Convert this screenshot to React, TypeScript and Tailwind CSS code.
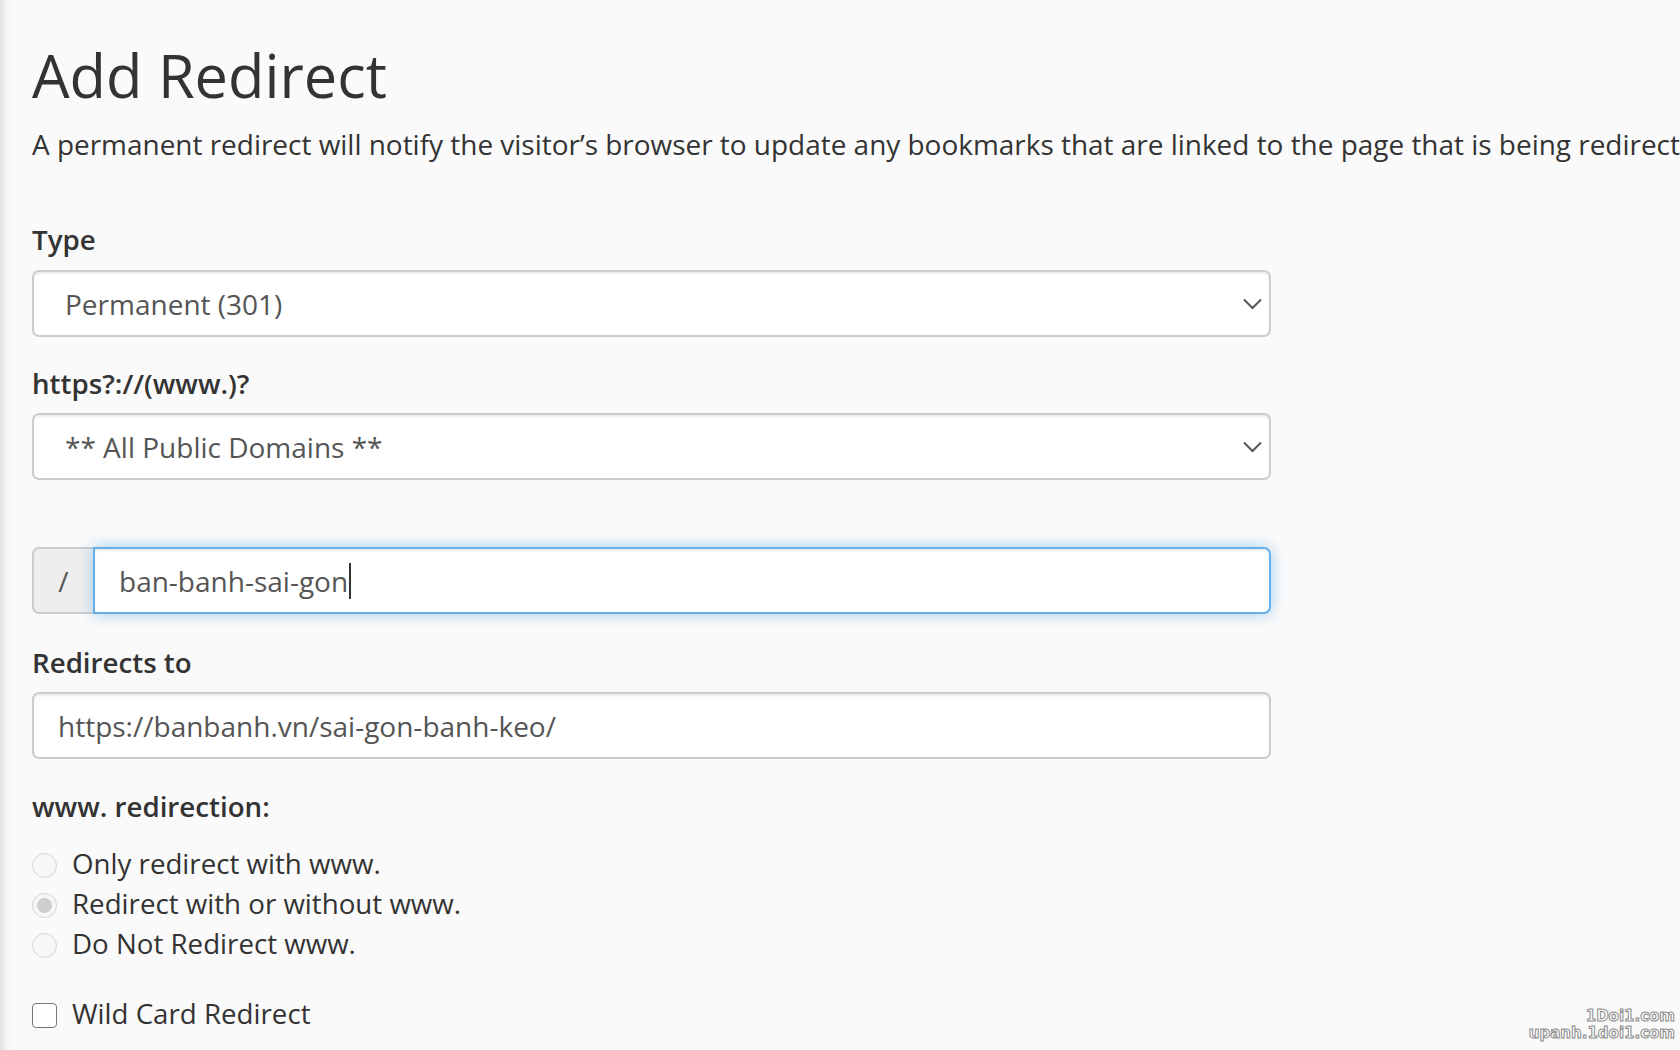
import { ChangeEvent } from 'react'

/** cPanel-style "Add Redirect" form, captured at ~195% browser zoom. */

function Label({ children, className = '' }: { children: string; className?: string }) {
  return (
    <label className={`block text-[27.7px] leading-[37px] font-semibold text-[#333] ${className}`}>
      {children}
    </label>
  )
}

function Chevron() {
  return (
    <svg
      className="pointer-events-none absolute right-[9px] top-1/2 -translate-y-1/2"
      width="19"
      height="11"
      viewBox="0 0 19 11"
      fill="none"
    >
      <polyline points="1,1 9.5,9.5 18,1" stroke="#555" strokeWidth="2" />
    </svg>
  )
}

function FakeSelect({ value }: { value: string }) {
  return (
    <div className="relative">
      <select
        value={value}
        onChange={(_e: ChangeEvent<HTMLSelectElement>) => {}}
        className="block h-[67px] w-full appearance-none rounded-[7px] border-2 border-[#ccc] bg-white pl-[31px] pr-10 text-[28px] text-[#555] shadow-[inset_0_2px_2px_rgba(0,0,0,0.075)] outline-none"
      >
        <option>{value}</option>
      </select>
      <Chevron />
    </div>
  )
}

function Radio({ checked, label }: { checked?: boolean; label: string }) {
  return (
    <div className="flex h-[40px] items-start">
      <span className="mt-[10px] flex h-[25px] w-[25px] shrink-0 items-center justify-center rounded-full border border-[#d6d6d6] bg-[#f7f7f7]">
        {checked && <span className="h-[15px] w-[15px] rounded-full bg-[#cfcfcf]" />}
      </span>
      <span className="ml-[15px] text-[27.7px] leading-[40px] text-[#333]">{label}</span>
    </div>
  )
}

export default function App() {
  return (
    <div className="relative h-[1050px] w-[1680px] overflow-hidden bg-[#fafafa] bg-[linear-gradient(90deg,#e0e0e0_0px,#f3f3f3_6px,#fafafa_12px)] font-['Open_Sans',sans-serif] text-[#333]">
      <div className="pl-[32px]">
        <h1 className="mt-[39px] text-[59.5px] leading-[72px] font-normal">Add Redirect</h1>
        <p className="mt-[15px] whitespace-nowrap text-[27.95px] leading-[37px]">
          A permanent redirect will notify the visitor’s browser to update any bookmarks that are linked to the page that is being redirected.
        </p>

        <form className="w-[1239px]">
          <Label className="mt-[58px] mb-[12px]">Type</Label>
          <FakeSelect value="Permanent (301)" />

          <Label className="mt-[28px] mb-[11px]">https?://(www.)?</Label>
          <FakeSelect value="** All Public Domains **" />

          <div className="mt-[67px] flex h-[67px]">
            <span className="flex w-[61px] shrink-0 items-center justify-center rounded-l-[7px] border-2 border-r-0 border-[#ccc] bg-[#eee] text-[28px] text-[#555]">
              /
            </span>
            <div className="flex flex-1 items-center rounded-r-[7px] border-2 border-[#66afe9] bg-white pl-[24px] text-[28px] text-[#555] shadow-[inset_0_2px_2px_rgba(0,0,0,0.075),0_0_15px_rgba(102,175,233,0.6)]">
              <span>ban-banh-sai-gon</span>
              <span className="ml-px h-[36px] w-[2px] bg-[#333]" />
            </div>
          </div>

          <Label className="mt-[30px] mb-[11px]">Redirects to</Label>
          <input
            readOnly
            value="https://banbanh.vn/sai-gon-banh-keo/"
            className="block h-[67px] w-full rounded-[7px] border-2 border-[#ccc] bg-white pl-[24px] text-[28px] text-[#555] shadow-[inset_0_2px_2px_rgba(0,0,0,0.075)] outline-none"
          />

          <Label className="mt-[29px]">www. redirection:</Label>
          <div className="mt-[18px]">
            <Radio label="Only redirect with www." />
            <Radio checked label="Redirect with or without www." />
            <Radio label="Do Not Redirect www." />
          </div>

          <div className="mt-[30px] flex h-[40px] items-start">
            <span className="mt-[10px] h-[25px] w-[25px] shrink-0 rounded-[4px] border-[1.5px] border-[#767676] bg-white" />
            <span className="ml-[15px] text-[27.7px] leading-[40px] text-[#333]">Wild Card Redirect</span>
          </div>
        </form>
      </div>

      <div className="absolute right-[5px] bottom-[8px] flex flex-col items-end font-['DejaVu_Sans',sans-serif] text-[15px] leading-[17px] font-bold text-white [-webkit-text-stroke:1px_#8a8a8a]">
        <span>1Doi1.com</span>
        <span>upanh.1doi1.com</span>
      </div>
    </div>
  )
}
